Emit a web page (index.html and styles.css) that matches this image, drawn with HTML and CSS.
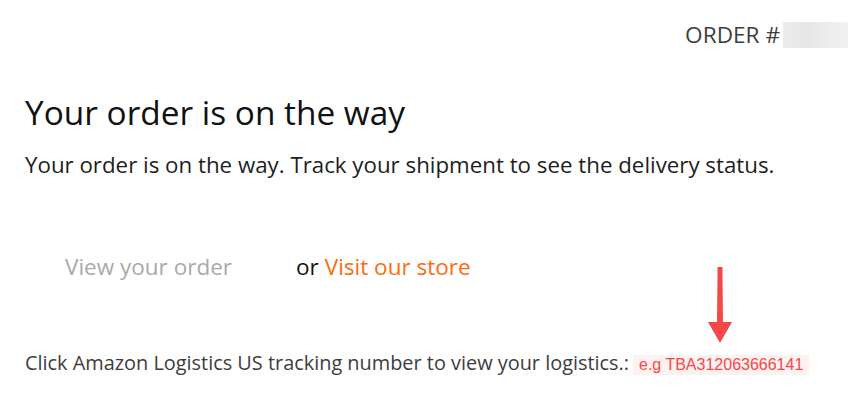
FILE: index.html
```html
<!DOCTYPE html>
<html>
<head>
<meta charset="utf-8">
<link rel="stylesheet" href="styles.css">
</head>
<body>
<div class="page">
  <header class="top">
    <span class="order-label">ORDER #</span>
    <span class="order-blur"></span>
  </header>
  <h1 class="title">Your order is on the way</h1>
  <p class="lead">Your order is on the way. Track your shipment to see the delivery status.</p>
  <div class="actions">
    <a class="view-btn">View your order</a>
    <span class="or">or</span>
    <a class="store-link">Visit our store</a>
  </div>
  <div class="track">
    <span class="track-text">Click Amazon Logistics US tracking number to view your logistics.:</span>
    <span class="track-wrap">
      <svg class="arrow" width="24" height="76" viewBox="0 0 24 76">
        <path d="M9.6 0 L14.4 0 L15 55 L24 55 L12 76 L0 55 L9 55 Z" fill="#f44848"/>
      </svg>
      <span class="example">e.g TBA312063666141</span>
    </span>
  </div>
</div>
</body>
</html>
```
FILE: styles.css
```css
* { box-sizing: border-box; }
html, body { margin: 0; padding: 0; background: #fff; }
body {
  font-family: "Open Sans", "Noto Sans", sans-serif;
  color: #333;
  width: 864px;
  height: 410px;
  overflow: hidden;
}
.page { padding: 0 16px 0 25px; }
.top {
  display: flex;
  justify-content: flex-end;
  align-items: center;
  height: 26px;
  margin-top: 22px;
}
.order-label { font-size: 22.6px; line-height: 26px; color: #3d3d3d; }
.order-blur {
  width: 65px;
  height: 26px;
  margin-left: 3px;
  background: linear-gradient(90deg, #ececec, #e6e6e6 40%, #ededed 70%, #f1f1f1);
}
.title {
  margin: 42px 0 0;
  font-size: 33.4px;
  font-weight: 400;
  color: #111;
  line-height: 44px;
}
.lead {
  margin: 16px 0 0;
  font-size: 22.3px;
  line-height: 30px;
  color: #1e1e1e;
}
.actions {
  display: flex;
  align-items: baseline;
  margin-top: 72px;
  font-size: 22.5px;
  line-height: 30px;
}
.view-btn { color: #a9a9a9; padding-left: 40px; width: 271px; }
.or { color: #111; margin-right: 6px; }
.store-link { color: #fd6a10; }
.track {
  display: flex;
  align-items: baseline;
  margin-top: 68px;
  font-size: 19.9px;
  line-height: 26px;
}
.track-text { color: #3d3d3d; }
.track-wrap { position: relative; margin-left: 4px; }
.arrow {
  position: absolute;
  left: 75px;
  bottom: calc(100% + 7px);
}
.example {
  display: inline-block;
  font-family: "Liberation Sans", Arial, sans-serif;
  font-size: 16px;
  line-height: 20px;
  color: #f44848;
  background: #fef2f0;
  padding: 0 6px;
}
```
